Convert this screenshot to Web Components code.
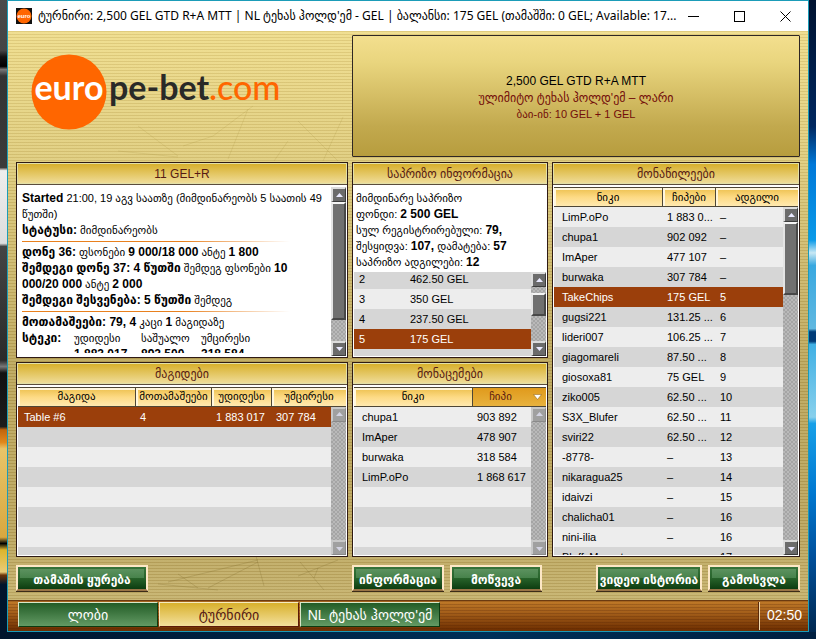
<!DOCTYPE html>
<html lang="ka">
<head>
<meta charset="utf-8">
<title>ტურნირი</title>
<style>
html, body { margin: 0; height: 100%; }
body { font: 11px/16px "Liberation Sans", "DejaVu Sans", sans-serif; color: #000; overflow: hidden; }
</style>
</head>
<body>
<tournament-app></tournament-app>
<script>
const define = (name, html, setup) => {
  const template = document.createElement('template');
  template.innerHTML = html;
  customElements.define(name, class extends HTMLElement {
    constructor() {
      super();
      this.attachShadow({ mode: 'open' }).append(template.content.cloneNode(true));
    }
    connectedCallback() { if (setup) setup(this, this.shadowRoot); }
  });
};

/* Bevelled scroll bar: from/to give the thumb's place as shares of the free track. */
define('scroll-rail', `
<style>
:host { display: flex; flex-direction: column; width: 15px; flex: none; box-sizing: border-box;
  background: repeating-conic-gradient(#a5a5a5 0 25%, #b9b9b9 0 50%) 0 0 / 4px 4px; }
button { width: 15px; height: 15px; flex: none; padding: 0; box-sizing: border-box; display: grid; place-items: center;
  background: #6b6b6b; border: 2px solid; border-color: #dcdcdc #3c3c3c #3c3c3c #dcdcdc; border-width: 2px 1px 1px 2px; }
svg { width: 7px; height: 5px; display: block; }
.thumb { background: #707070; border: 2px solid; border-color: #f4f4f4 #484848 #484848 #e4e4e4; box-sizing: border-box; }
:host([off]) button { background: #a0a0a0; border-color: #c8c8c8 #8a8a8a #8a8a8a #c8c8c8; }
:host([off]) svg { opacity: .7; }
:host([off]) .thumb { visibility: hidden; }
</style>
<button type="button" aria-label="ზემოთ"><svg viewBox="0 0 7 5"><path d="M3.5 0 7 4H0z" fill="#e9e9ff"/></svg></button>
<div class="before"></div><div class="thumb"></div><div class="after"></div>
<button type="button" aria-label="ქვემოთ"><svg viewBox="0 0 7 5"><path d="M0 1h7L3.5 5z" fill="#e9e9ff"/></svg></button>
`, (el, root) => {
  const from = +(el.getAttribute('from') || 0), to = +(el.getAttribute('to') || 100);
  root.querySelector('.before').style.flex = from + ' 0 0';
  root.querySelector('.thumb').style.flex = (to - from) + ' 0 0';
  root.querySelector('.after').style.flex = (100 - to) + ' 0 0';
});

/* Framed panel with a gold caption. */
define('gold-panel', `
<style>
:host { display: flex; flex-direction: column; min-width: 0; min-height: 0; box-sizing: border-box;
  border: 1px solid #2e1a14; background: #fff; }
h2 { margin: 0 0 1px; flex: none; height: 21px; box-sizing: border-box; font: 12px/20px "Liberation Sans", "DejaVu Sans", sans-serif; color: #561a14; text-align: center;
  background: linear-gradient(#d8b02c, #efdc98); border: 1px solid #e2e0a8; box-shadow: 0 1px #5a4c3c; }
.body { flex: 1; min-height: 0; display: flex; flex-direction: column; padding: 2px 1px 1px; }
</style>
<h2><slot name="caption"></slot></h2>
<div class="body"><slot></slot></div>
`);

/* Striped table beside a scroll rail. */
define('data-grid', `
<style>
:host { display: flex; flex-direction: column; flex: 1; min-height: 0; overflow: hidden; }
.view { flex: 1; min-height: 0; display: flex; }
.rows { flex: 1; min-width: 0; overflow: hidden;
  background: repeating-linear-gradient(#ededed 0 20px, #d6d6d6 20px 40px); }
.rows.odd { background: repeating-linear-gradient(#d6d6d6 0 17px, #ededed 17px 37px, #d6d6d6 37px 40px); }
table { width: 100%; border-collapse: separate; border-spacing: 0; table-layout: fixed; }
.odd table { margin-top: -3px; }
.head { flex: none; }
th { height: 20px; box-sizing: border-box; padding: 0; font-weight: normal; white-space: nowrap; position: relative;
  background: linear-gradient(#ecbf4c, #fdda84 50%, #ffe9b0); border: solid #4e4636; border-width: 1px 1px 1px 0;
  box-shadow: inset 2px 2px #fff6dc; line-height: 17px; }
th:last-child { border-right: 0; }
th.sorted { background: linear-gradient(#e09a1c, #e8b23e); color: #5c1a10; box-shadow: none; padding-right: 18px; }
th.sorted svg { position: absolute; right: 4px; top: 6px; }
td { height: 20px; padding: 0 0 0 4px; line-height: 20px; white-space: nowrap; overflow: hidden; }
td:first-child { padding-left: var(--lead, 8px); }
tr:nth-child(even) { background: #d6d6d6; }
tr:nth-child(odd) { background: #ededed; }
.odd tr:nth-child(odd) { background: #d6d6d6; }
.odd tr:nth-child(even) { background: #ededed; }
tr.on.on { background: #9b3f0b; color: #fff; }
</style>
<table class="head"></table>
<div class="view"><div class="rows"><table class="data"></table></div><scroll-rail></scroll-rail></div>
`, (el, root) => {
  const d = DATA[el.getAttribute('source')];
  const cols = list => '<colgroup>' + list.map(w => '<col' + (w ? ' style="width:' + w + 'px"' : '') + '>').join('') + '</colgroup>';
  const head = root.querySelector('.head');
  if (d.head) head.innerHTML = cols(d.cols) + '<tr>' + d.head.map((h, i) => i === d.sorted
    ? '<th class="sorted" scope="col">' + h + '<svg width="9" height="6" viewBox="0 0 9 6"><path d="M.5.5h8l-4 5z" fill="#fff" stroke="#8a5a10" stroke-width=".5"/></svg></th>'
    : '<th scope="col">' + h + '</th>').join('') + '</tr>';
  else head.remove();
  root.querySelector('.data').innerHTML = cols(d.cols) + d.rows.map((r, i) =>
    '<tr' + (i === d.on ? ' class="on"' : '') + '>' + r.map(c => '<td>' + c + '</td>').join('') + '</tr>').join('');
  if (d.odd) root.querySelector('.rows').classList.add('odd');
  if (d.lead) el.style.setProperty('--lead', d.lead + 'px');
  const rail = root.querySelector('scroll-rail');
  if (!d.thumb) rail.setAttribute('off', '');
  else {
    const fresh = document.createElement('scroll-rail');
    fresh.setAttribute('from', d.thumb[0]);
    fresh.setAttribute('to', d.thumb[1]);
    rail.replaceWith(fresh);
  }
});

const DATA = {
  players: {
    cols: [109, 53, 0], head: ['ნიკი', 'ჩიპები', 'ადგილი'], on: 4, thumb: [0, 22],
    rows: [['LimP.oPo', '1 883 0...', '–'], ['chupa1', '902 092', '–'], ['ImAper', '477 107', '–'], ['burwaka', '307 784', '–'],
      ['TakeChips', '175 GEL', '5'], ['gugsi221', '131.25 ...', '6'], ['lideri007', '106.25 ...', '7'], ['giagomareli', '87.50 ...', '8'],
      ['giosoxa81', '75 GEL', '9'], ['ziko005', '62.50 ...', '10'], ['S3X_Blufer', '62.50 ...', '11'], ['sviri22', '62.50 ...', '12'],
      ['-8778-', '–', '13'], ['nikaragua25', '–', '14'], ['idaivzi', '–', '15'], ['chalicha01', '–', '16'], ['nini-ilia', '–', '16'], ['BluffsMonart', '–', '17']]
  },
  tables: {
    cols: [118, 76, 60, 0], head: ['მაგიდა', 'მოთამაშეები', 'უდიდესი', 'უმცირესი'], on: 0, lead: 6,
    rows: [['Table #6', '4', '1 883 017', '307 784']]
  },
  stacks: {
    cols: [119, 0], head: ['ნიკი', 'ჩიპი'], sorted: 1,
    rows: [['chupa1', '903 892'], ['ImAper', '478 907'], ['burwaka', '318 584'], ['LimP.oPo', '1 868 617']]
  },
  prizes: {
    cols: [52, 0], on: 3, odd: true, lead: 5, thumb: [12, 50],
    rows: [['2', '462.50 GEL'], ['3', '350 GEL'], ['4', '237.50 GEL'], ['5', '175 GEL']]
  }
};

define('title-bar', `
<style>
:host { display: flex; align-items: center; height: 30px; flex: none; background: #fff; padding: 0 0 0 8px; font: 12px/16px "Noto Sans", "DejaVu Sans", sans-serif; }
.app { width: 16px; height: 16px; flex: none; margin-right: 6px; }
span { flex: 1; min-width: 0; white-space: nowrap; }
button { width: 46px; height: 28px; border: 0; padding: 0; background: none; flex: none; display: grid; place-items: center; }
</style>
<svg class="app" viewBox="0 0 16 16"><rect width="16" height="16" fill="#111"/><circle cx="8" cy="8" r="7.500" fill="#f60"/><text x="8" y="10" font-family="Liberation Sans" font-weight="bold" font-size="6" fill="#fff" text-anchor="middle">euro</text></svg>
<span>ტურნირი: 2,500 GEL GTD R+A MTT | NL ტეხას ჰოლდ'ემ - GEL | ბალანსი: 175 GEL (თამაშში: 0 GEL; Available: 17...</span>
<button type="button" aria-label="ჩაკეცვა"><svg width="11" height="11"><path d="M0 5.500h11" stroke="#000"/></svg></button>
<button type="button" aria-label="გაშლა"><svg width="11" height="11"><rect x=".5" y=".5" width="10" height="10" fill="none" stroke="#000"/></svg></button>
<button type="button" aria-label="დახურვა"><svg width="11" height="11"><path d="M.5.5l10 10M10.500.5l-10 10" stroke="#000"/></svg></button>
`);

define('brand-logo', `
<style>:host { display: block; } svg { display: block; }</style>
<svg width="270" height="76" viewBox="0 0 270 76" role="img" aria-label="europe-bet.com" font-family="Lato, 'Liberation Sans', sans-serif" font-size="34">
<circle cx="38" cy="38" r="37.500" fill="#f60"/>
<text x="38" y="46" font-weight="700" fill="#fff" text-anchor="middle">euro</text>
<text x="78" y="46" font-weight="700" fill="#2a2a28">pe-bet</text>
<text x="178" y="46" font-weight="500" fill="#f60">.com</text>
</svg>
`);

define('event-banner', `
<style>
:host { display: flex; flex-direction: column; justify-content: center; align-items: center; box-sizing: border-box; height: 122px;
  border: 1px solid #2f2723; background: linear-gradient(#f3df8e, #e9d57e 22%, #c2a94e 75%, #b79d3e); color: #730d0a; padding-top: 2px; border-radius: 1px; }
h1 { margin: 0; font: 12px/18px "Liberation Sans", sans-serif; color: #000; }
p { margin: 0; }
.game { font-size: 12px; }
</style>
<h1>2,500 GEL GTD R+A MTT</h1><p class="game">ულიმიტო ტეხას ჰოლდ'ემ – ლარი</p><p>ბაი-ინ: 10 GEL + 1 GEL</p>
`);

define('status-info', `
<style>
:host { display: flex; flex: 1; min-height: 0; }
.text { flex: 1; min-width: 0; overflow: hidden; padding: 3px 0 0 4px; margin-bottom: 3px; white-space: nowrap; }
p { margin: 0; }
hr { border: 0; height: 1px; margin: 3px 41px 2px 0; background: linear-gradient(90deg, #e8801e 60%, #fff); }
table { border-collapse: collapse; table-layout: fixed; width: 260px; }
td, th { padding: 0; text-align: left; font-weight: normal; }
td, b, th:first-child { font-weight: bold; font-size: 12px; line-height: 16px; }
b { line-height: 1; }
</style>
<div class="text">
<p><b>Started</b> 21:00, 19 აგვ საათზე (მიმდინარეობს 5 საათის 49<br>წუთში)<br><b>სტატუსი:</b> მიმდინარეობს</p><hr>
<p><b>დონე 36:</b> ფსონები <b>9 000/18 000</b> ანტე <b>1 800</b><br><b>შემდეგი დონე 37: 4 წუთში</b> შემდეგ ფსონები <b>10</b><br><b>000/20 000</b> ანტე <b>2 000</b><br><b>შემდეგი შესვენება: 5 წუთში</b> შემდეგ</p><hr>
<p><b>მოთამაშეები: 79, 4</b> კაცი <b>1</b> მაგიდაზე</p>
<table><colgroup><col style="width:52px"><col style="width:67px"><col style="width:60px"><col></colgroup><tr><th scope="row">სტეკი:</th><th>უდიდესი</th><th>საშუალო</th><th>უმცირესი</th></tr><tr><td></td><td>1 883 017</td><td>892 500</td><td>318 584</td></tr></table>
</div>
<scroll-rail from="0" to="85"></scroll-rail>
`);

define('prize-info', `
<style>
:host { display: flex; flex-direction: column; flex: 1; min-height: 0; }
p { margin: 0; padding: 3px 0 2px 2px; white-space: nowrap; flex: none; }
b { font-size: 12px; line-height: 1; }
</style>
<p>მიმდინარე საპრიზო<br>ფონდი: <b>2 500 GEL</b><br>სულ რეგისტრირებული: <b>79,</b><br>შესყიდვა: <b>107,</b> დამატება: <b>57</b><br>საპრიზო ადგილები: <b>12</b></p>
<data-grid source="prizes"></data-grid>
`);

define('green-button', `
<style>
:host { display: block; min-width: 92px; box-sizing: border-box; }
button { width: 100%; height: 26px; box-sizing: border-box; padding: 3px 1px 0; white-space: nowrap; text-align: center;
  border: 2px solid #fde7c6; border-bottom-color: #9a7446; box-shadow: 0 1px #3c2c18; color: #fff;
  font: bold 12px/18px "Liberation Sans", "DejaVu Sans", sans-serif;
  background: linear-gradient(#5c925f, #47824b) 2px 2px / calc(100% - 4px) 9px no-repeat, linear-gradient(#37743b, #28632b 50%, #0d3d10); }
</style>
<button type="button"><slot></slot></button>
`);

define('action-row', `
<style>
:host { display: grid; grid-template-columns: 332fr 196fr 248fr; gap: 4px; padding: 0 0 9px; flex: none; }
div { display: flex; gap: 6px; min-width: 0; }
.end { justify-content: flex-end; }
.wide { min-width: 132px; }
.mid { min-width: 106px; }
</style>
<div><green-button class="wide">თამაშის ყურება</green-button></div>
<div><green-button>ინფორმაცია</green-button><green-button>მოწვევა</green-button></div>
<div class="end"><green-button class="mid">ვიდეო ისტორია</green-button><green-button>გამოსვლა</green-button></div>
`);

define('task-bar', `
<style>
:host { display: flex; align-items: stretch; gap: 1px; height: 31px; flex: none; box-sizing: border-box; padding: 1px 0 0 10px; border-top: 1px solid #6b3a10;
  background: repeating-linear-gradient(rgba(70,25,0,.22) 0 1px, transparent 1px 3px), linear-gradient(#c07a28, #a35e1a 40%, #6c2d00); color: #fff; }
button { width: 140px; height: 25px; box-sizing: border-box; border: 1px solid; border-color: #d9e6c8 #0c3a10 #0c3a10 #d9e6c8; padding: 0; white-space: nowrap;
  font: 14px/24px "Liberation Sans", "DejaVu Sans", sans-serif; color: #fff; background: linear-gradient(#225c26, #639a64); }
.on { background: linear-gradient(#d8b02c, #f3e09c); color: #561a14; border-color: #f5ebc0 #5c1a08 #5c1a08 #f5ebc0; }
time { margin-left: auto; padding: 0 6px 0 7px; border-left: 1px solid #f0d8b0; box-shadow: -1px 0 #5c2a08; font-size: 14px; line-height: 26px; margin-bottom: 1px; }
</style>
<button type="button">ლობი</button><button type="button" class="on">ტურნირი</button><button type="button">NL ტეხას ჰოლდ'ემ</button>
<time>02:50</time>
`);

define('tournament-app', `
<style>
:host { display: grid; grid-template-columns: 7px minmax(0, 1fr) 7px; grid-template-rows: minmax(0, 1fr) 7px; height: 100vh; background: linear-gradient(90deg, #00142c, #003058 60%, #001f40); }
.left { background: linear-gradient(#4a4a4a 0, #444 8%, #111 9%, #000 10.500%, #777 11%, #333 12%, #3a3a3a 26.500%, #eee 27%, #ddd 38.500%, #444 39%, #2a2a2a 57%, #777 58%, #111 59%, #1c1c1c 67.500%, #c0640c 68%, #e0881c 70%, #e8c468 71%, #d8a840 85%, #000 86%, #dcb42c 87%, #e8cc78 90.500%, #6c3408 91%, #00142c 92.500%); }
.right { background: linear-gradient(#001230 0, #002860 20%, #0078d8 26%, #0a9ae8 38%, #c8e8f4 40%, #38a8e0 42%, #60b8e0 52%, #003c78 52.500%, #003c78 54%, #40b0e4 54.500%, #88d0ec 66%, #18a0e8 67%, #0078d0 78%, #00509c 88%, #002850 100%); }
main { display: flex; flex-direction: column; min-height: 0; border: 1px solid #1b9cb8; }
.felt { flex: 1; min-height: 0; display: flex; flex-direction: column; padding: 4px 8px 0; position: relative; isolation: isolate;
  background: repeating-linear-gradient(rgba(110,80,0,.11) 0 1px, rgba(255,250,190,.12) 1px 3px), linear-gradient(#eedb8c, #decb7e 22%, #cdb86e 38%, #b8a25a 60%, #b7a15c 88%, #c2ae6c); }
.marks { position: absolute; z-index: -1; }
.marks.low { left: 140px; bottom: 6px; }
.marks.high { left: 100px; top: 70px; }
.top, .panels { display: grid; grid-template-columns: 332fr 196fr 248fr; gap: 4px; }
.top { flex: none; margin-bottom: 5px; }
brand-logo { padding: 19px 0 0 15px; }
event-banner { grid-column: 2 / 4; }
.panels { flex: 1; min-height: 0; grid-template-rows: minmax(0, 1fr) minmax(0, 1fr); margin-bottom: 8px; }
.tall { grid-column: 3; grid-row: 1 / 3; }
</style>
<div class="left"></div>
<main>
<title-bar></title-bar>
<div class="felt">
<svg class="marks high" width="240" height="62" fill="none" stroke="#a08838" stroke-opacity=".18"><path d="M30 25l40 30M75 45l30-10 40-30M140 8l-20 50M180 40l-14 20M215 60l20-44M190 20l40 40M10 50l60 6"/></svg>
<svg class="marks low" width="300" height="40" fill="none" stroke="#7c6628" stroke-opacity=".25"><path d="M20 28l90-22M60 34l50-26M108 2l8 30M152 8l24 28M150 22l40-16M10 30l60 6M170 14l-4 10M30 20l20 14"/></svg>
<div class="top"><brand-logo></brand-logo><event-banner></event-banner></div>
<div class="panels">
<gold-panel><span slot="caption">11 GEL+R</span><status-info></status-info></gold-panel>
<gold-panel><span slot="caption">საპრიზო ინფორმაცია</span><prize-info></prize-info></gold-panel>
<gold-panel class="tall"><span slot="caption">მონაწილეები</span><data-grid source="players"></data-grid></gold-panel>
<gold-panel><span slot="caption">მაგიდები</span><data-grid source="tables"></data-grid></gold-panel>
<gold-panel><span slot="caption">მონაცემები</span><data-grid source="stacks"></data-grid></gold-panel>
</div>
<action-row></action-row>
</div>
<task-bar></task-bar>
</main>
<div class="right"></div>
`);
</script>
</body>
</html>
